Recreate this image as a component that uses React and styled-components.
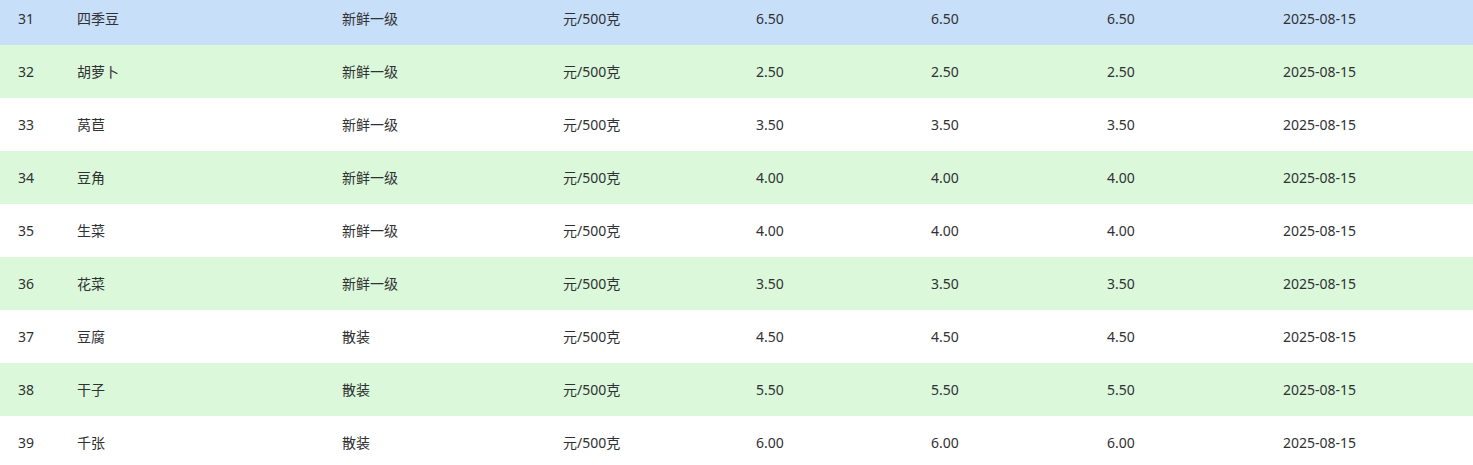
import React from "react";
import styled, { createGlobalStyle } from "styled-components";

const Global = createGlobalStyle`
  html, body {
    margin: 0;
    padding: 0;
    background: #fff;
    overflow: hidden;
  }
  body {
    font-family: "Noto Sans", "Noto Sans CJK SC", sans-serif;
    font-size: 14px;
    color: #303133;
  }
`;

const Table = styled.div`
  width: 1473px;
  margin-top: -8px;
`;

const Row = styled.div`
  display: grid;
  grid-template-columns: 59px 265px 221px 193px 175px 176px 176px 1fr;
  height: 53px;
  align-items: center;
  background: ${(p) => (p.$current ? "#c8dffa" : p.$stripe ? "#dbf8db" : "#ffffff")};
`;

const Cell = styled.div`
  padding-left: 18px;
  white-space: nowrap;
  line-height: 20px;
`;

const rows = [
  [31, "四季豆", "新鲜一级", "6.50"],
  [32, "胡萝卜", "新鲜一级", "2.50"],
  [33, "莴苣", "新鲜一级", "3.50"],
  [34, "豆角", "新鲜一级", "4.00"],
  [35, "生菜", "新鲜一级", "4.00"],
  [36, "花菜", "新鲜一级", "3.50"],
  [37, "豆腐", "散装", "4.50"],
  [38, "干子", "散装", "5.50"],
  [39, "千张", "散装", "6.00"],
];

export default function App() {
  return (
    <>
      <Global />
      <Table>
        {rows.map(([id, name, grade, price], i) => (
          <Row key={id} $current={i === 0} $stripe={i % 2 === 1}>
            <Cell>{id}</Cell>
            <Cell>{name}</Cell>
            <Cell>{grade}</Cell>
            <Cell>元/500克</Cell>
            <Cell>{price}</Cell>
            <Cell>{price}</Cell>
            <Cell>{price}</Cell>
            <Cell>2025-08-15</Cell>
          </Row>
        ))}
      </Table>
    </>
  );
}
